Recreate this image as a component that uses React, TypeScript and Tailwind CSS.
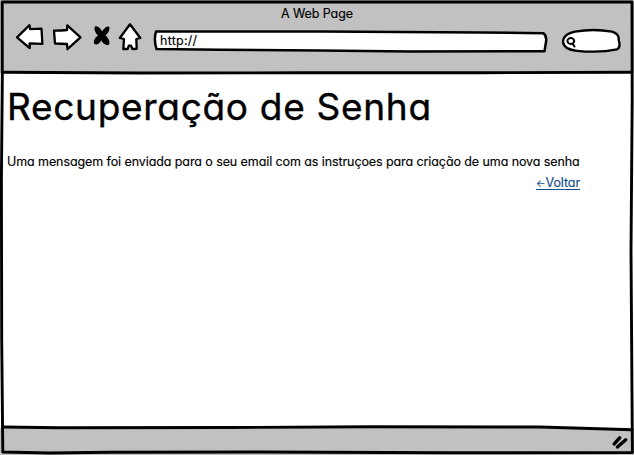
const ink = {
  fill: "white",
  stroke: "black",
  strokeWidth: 2.5,
  strokeLinejoin: "round" as const,
  strokeLinecap: "round" as const,
};

function NavIcons() {
  return (
    <svg className="block h-[34px] w-[130px]" viewBox="14 20 130 34" aria-hidden="true">
      <path {...ink} strokeWidth={2.3} d="M17 37.3 L29.5 25.2 L30.2 29.2 L41.5 28.7 L42.4 43.8 L29.7 43.3 L29.7 48.2 Z" />
      <path {...ink} strokeWidth={2.3} d="M54 30.6 Q61 30.7 67 30 L67.3 25.3 L80.5 37.4 L67.5 49.2 L67 44 L55 43.5 Z" />
      <path {...ink} strokeWidth={2.3} d="M130 24.3 L119.8 38 L124 39 L123.3 49 L127.7 49 L128.8 45.6 L131 45.6 L132.5 49 L136.7 48.8 L136.3 39 L140.3 38 Z" />
      <path d="M95 26.6 C97.5 25 101 29 102.2 31.5 C103.5 28.5 107.5 25 109.3 27 C110.3 30 107.5 33.5 105.5 35.6 C108 37.5 110.6 42 109 44.5 C106 46.5 102.5 43 101.3 40.3 C100 43 96.5 46 94.2 43.8 C93 40.5 95.5 37.5 98 35.6 C95.5 33 93.5 29.5 95 26.6 Z" />
    </svg>
  );
}

function AddressBar() {
  return (
    <div className="relative h-[26px] w-[398px]">
      <svg className="absolute inset-0 h-full w-full" viewBox="152 28 398 26" aria-hidden="true">
        <path {...ink} d="M156 31.5 L320 31.5 L400 32 L480 32.4 L543.5 33.2 Q547 36 546 42 L544.5 51.3 L410 51.4 L320 50.5 L220 49.8 L156.5 49 Q153.5 40 156 31.5 Z" />
      </svg>
      <span className="relative block pl-[8px] pt-[3px] text-[12.5px] leading-[20px] tracking-[0.25px]">http://</span>
    </div>
  );
}

function SearchBox() {
  return (
    <svg className="block h-[28px] w-[64px]" viewBox="560 27 64 28" aria-hidden="true">
      <path {...ink} strokeWidth={2.3} d="M575 31.6 Q594 28.4 612 31.7 Q619.5 34 618.7 40 Q621 47.5 617 49.3 Q600 53.2 577 50.8 Q564 49.5 563 42 Q563 34 575 31.6 Z" />
      <ellipse cx="570.8" cy="41" rx="3.4" ry="3" fill="none" stroke="black" strokeWidth="2" />
      <path {...ink} fill="none" strokeWidth={2.1} d="M572.5 43.5 L574.5 46.5" />
    </svg>
  );
}

function WindowFrame() {
  return (
    <svg className="pointer-events-none absolute inset-0 h-[455px] w-[634px]" viewBox="0 0 634 455" aria-hidden="true">
      <g fill="none" stroke="black" strokeWidth="2.9" strokeLinejoin="round" strokeLinecap="round">
        <path d="M2.2 2 L632 2 L632.2 100 L631 250 L632.4 452.5 L450 452.8 L260 452 L110 452.2 L50 453 L2.8 452 L1.7 340 L1.4 180 L2.3 80 Z" />
        <path d="M2.5 72.2 L140 73 L300 72.8 L480 72.7 L631 72.3" />
        <path d="M2.5 427 L60 427.8 L230 427.5 L370 426.7 L540 427 L632 429.8" />
      </g>
    </svg>
  );
}

export default function App() {
  return (
    <div className="relative flex h-[455px] w-[634px] flex-col overflow-hidden bg-white font-['Inter',sans-serif] text-black [-webkit-text-stroke:0.15px] [font-feature-settings:'cv11','ss03']">
      <header className="h-[73px] shrink-0 bg-[#c1c1c1]">
        <div className="pt-[4px] text-center text-[12.5px] leading-[20px] tracking-[-0.1px]">A Web Page</div>
        <div className="flex items-start pl-[14px]">
          <div className="-mt-[4px]"><NavIcons /></div>
          <div className="ml-[8px] mt-[4px]"><AddressBar /></div>
          <div className="ml-[10px] mt-[3px]"><SearchBox /></div>
        </div>
      </header>
      <main className="flex w-[580px] grow flex-col pl-[7px]">
        <h1 className="mt-[11px] whitespace-nowrap text-[37px] leading-[46px] tracking-[0.7px] [-webkit-text-stroke:0.4px]">Recuperação de Senha</h1>
        <p className="mt-[22px] whitespace-nowrap text-[12.5px] leading-[20px] tracking-[-0.09px]">
          Uma mensagem foi enviada para o seu email com as instruçoes para criação de uma nova senha
        </p>
        <a href="#" className="mt-[4px] flex h-[14px] items-center self-end border-b border-[#134d8b] text-[12.5px] leading-[14px] tracking-[-0.1px] text-[#134d8b]">
          <span className="text-[10px]">←</span>
          <span>Voltar</span>
        </a>
      </main>
      <footer className="flex h-[27px] shrink-0 items-center justify-end bg-[#c1c1c1] pr-[4px]">
        <svg className="block h-[18px] w-[18px]" viewBox="612 433 18 18" aria-hidden="true">
          <g stroke="black" strokeWidth="3.4" strokeLinecap="round">
            <path d="M614.3 443.9 L619.6 437.8" />
            <path d="M617.4 447 L625.8 439.8" />
          </g>
        </svg>
      </footer>
      <WindowFrame />
    </div>
  );
}
